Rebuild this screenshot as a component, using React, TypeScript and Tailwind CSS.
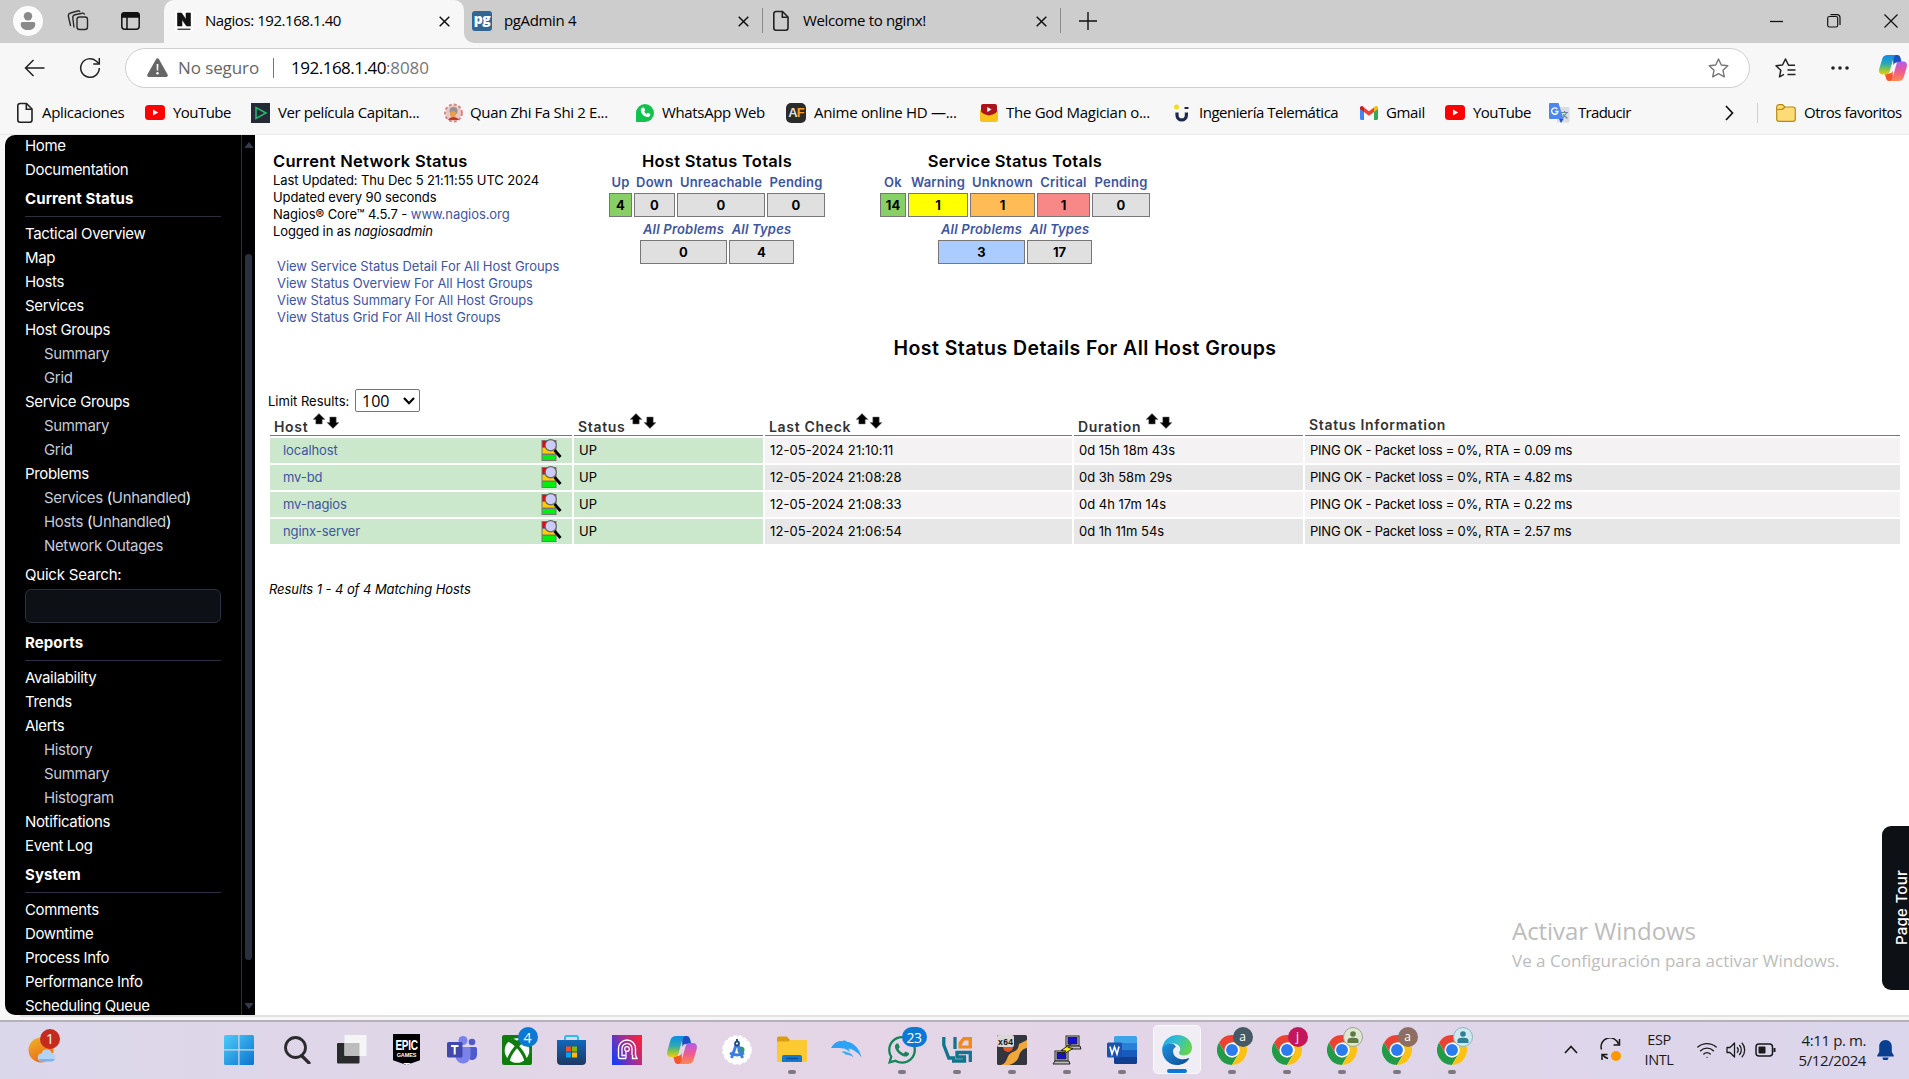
import React from 'react';
import { FaWhatsapp } from 'react-icons/fa';
import { Wifi } from 'lucide-react';

const ui = "font-['Open_Sans','Noto_Sans',sans-serif]";

/* ---------- small icons ---------- */

function PageIcon() {
  return (
    <svg width="18" height="22" viewBox="0 0 18 22" fill="none" stroke="#222" strokeWidth="1.6">
      <path d="M4 1.5h6.5L16 7v11a2.2 2.2 0 0 1-2.2 2.2H4A2.2 2.2 0 0 1 1.8 18V3.700A2.200 2.200 0 0 1 4 1.500Z" />
      <path d="M10.300 1.700V7.200H16" />
    </svg>
  );
}

function CloseX() {
  return (
    <svg width="11" height="11" viewBox="0 0 11 11" stroke="#111" strokeWidth="1.5">
      <path d="M.7.7l9.600 9.600M10.300.7.7 10.300" />
    </svg>
  );
}

function YouTubeIcon() {
  return (
    <svg width="20" height="15" viewBox="0 0 20 15">
      <rect width="20" height="15" rx="3.500" fill="#f00" />
      <path d="M8 4.500v6l5.200-3z" fill="#fff" />
    </svg>
  );
}

function CopilotIcon({ id, width, height }: { id: string; width: number; height: number }) {
  return (
    <svg width={width} height={height} viewBox="0 0 30 28" preserveAspectRatio="none">
      <defs>
        <linearGradient id={id + 'a'} x1="0" y1="0" x2="0" y2="1">
          <stop offset="0" stopColor="#0f8be8" />
          <stop offset=".45" stopColor="#2aa8b8" />
          <stop offset=".75" stopColor="#8cc63e" />
          <stop offset="1" stopColor="#f6c90e" />
        </linearGradient>
        <linearGradient id={id + 'b'} x1="0" y1="0" x2="0" y2="1">
          <stop offset="0" stopColor="#b05cf0" />
          <stop offset=".5" stopColor="#ee5a92" />
          <stop offset="1" stopColor="#ff8a4c" />
        </linearGradient>
      </defs>
      <path d="M15 0h4.500c2.200 0 3 1.200 3.600 3.300L24.300 8H19c-2 0-3 1.200-3.600 3z" fill="#1b4fc4" />
      <path d="M15 28h-4c-2.200 0-3-1.200-3.600-3.300L6.200 20H11c2 0 3-1.200 3.600-3z" fill="#f4552c" />
      <path d="M9.500 0H19c-1.700 0-3 1.500-3.700 4L11.500 17.500C10.800 20 9.700 21 7.500 21H4C.4 21-.6 18 .4 14.500L3.500 4C4.400 1.300 6 0 9.500 0Z" fill={`url(#${id}a)`} />
      <path d="M20.500 28H11c1.700 0 3-1.500 3.700-4L18.500 10.500C19.200 8 20.300 7 22.500 7H26c3.600 0 4.600 3 3.600 6.500L26.500 24c-.9 2.700-2.500 4-6 4Z" fill={`url(#${id}b)`} />
    </svg>
  );
}

/* ---------- tab strip ---------- */

function TabStrip() {
  return (
    <div className="flex h-[43px] bg-[#cdcdcd]">
      <div className="flex w-[164px] items-center rounded-br-[10px] bg-[#cdcdcd] pb-[2px] pl-[13px]">
        <div className="flex h-[30px] w-[30px] items-center justify-center rounded-full bg-[#fbfbfb]">
          <svg width="16" height="18" viewBox="0 0 16 18" fill="#8a8a8a">
            <circle cx="8" cy="4.200" r="4.200" />
            <path d="M2.500 10h11A1.800 1.800 0 0 1 15.300 12c0 4-3 6-7.300 6S.7 16 .7 12a1.800 1.800 0 0 1 1.800-2Z" />
          </svg>
        </div>
        <svg className="ml-6" width="22" height="21" viewBox="0 0 22 21" fill="none" stroke="#2a2a2a" strokeWidth="1.400">
          <rect x="10" y="7" width="10.500" height="12.500" rx="2.500" />
          <path d="M7 17.500 5.800 8A3 3 0 0 1 8 4.800l7-1.600a2 2 0 0 1 2.500 1.500" />
          <path d="M3.600 16 1.400 6.500A3 3 0 0 1 3.500 3l7-2a2 2 0 0 1 2.500 1" />
        </svg>
        <svg className="ml-8" width="19" height="18" viewBox="0 0 19 18" fill="none" stroke="#111" strokeWidth="1.500">
          <rect x=".8" y=".8" width="17.400" height="16.400" rx="3" />
          <path d="M1 3a2 2 0 0 1 2-2h13a2 2 0 0 1 2 2v2H1Z" fill="#111" />
          <path d="M6 5v12" />
        </svg>
      </div>
      <div className="flex w-[300px] items-center rounded-t-[10px] bg-[#f7f7f7] pb-[2px] pl-[11px] pr-[14px]">
        <svg width="18" height="20" viewBox="0 0 18 20">
          <rect width="18" height="20" fill="#fff" />
          <path d="M2.500 15V2h4l4.500 6.500V2h4.500v13h-4L7 8.500V15Z" fill="#111" stroke="#111" strokeWidth=".6" />
          <path d="M2.500 18.300h13" stroke="#444" strokeWidth="1.500" />
        </svg>
        <span className="ml-3 text-[15px] tracking-[-0.43px]">Nagios: 192.168.1.40</span>
        <span className="ml-auto pt-px"><CloseX /></span>
      </div>
      <div className="flex flex-1 bg-[#f7f7f7]">
        <div className="flex flex-1 items-center rounded-bl-[10px] bg-[#cdcdcd] pb-[2px]">
          <div className="flex w-[298px] items-center pl-2 pr-[13px]">
            <span className="flex h-5 w-5 items-center justify-center rounded-[3px] bg-[#326690] pb-1 font-['Open_Sans',sans-serif] text-[14px] font-extrabold leading-none tracking-[-0.5px] text-white">pg</span>
            <span className="ml-[12px] text-[15px] tracking-[-0.35px]">pgAdmin 4</span>
            <span className="ml-auto pt-px"><CloseX /></span>
          </div>
          <div className="flex h-[25px] w-[299px] items-center border-x border-[#8b8b8b] pl-[9px] pr-[13px]">
            <PageIcon />
            <span className="ml-[13px] text-[15px] tracking-[-0.35px]">Welcome to nginx!</span>
            <span className="ml-auto pt-px"><CloseX /></span>
          </div>
          <svg className="ml-[18px]" width="18" height="18" viewBox="0 0 18 18" stroke="#111" strokeWidth="1.400">
            <path d="M9 0v18M0 9h18" />
          </svg>
          <div className="ml-auto flex items-center pr-[11px] pt-px">
            <svg width="14" height="14" viewBox="0 0 14 14" stroke="#111" strokeWidth="1.300"><path d="M1 7.500h13" /></svg>
            <svg className="ml-[44px]" width="14" height="14" viewBox="0 0 14 14" fill="none" stroke="#111" strokeWidth="1.200">
              <rect x=".7" y="2.500" width="10" height="10.500" rx="1.800" />
              <path d="M3.500.7h6.500a3 3 0 0 1 3 3V11" />
            </svg>
            <svg className="ml-[43px]" width="14" height="14" viewBox="0 0 14 14" stroke="#111" strokeWidth="1.200"><path d="M.5.5l13 13M13.500.5l-13 13" /></svg>
          </div>
        </div>
      </div>
    </div>
  );
}

/* ---------- address bar ---------- */

function AddressRow() {
  return (
    <div className="flex h-[49px] items-center">
      <svg className="ml-6" width="21" height="18" viewBox="0 0 21 18" fill="none" stroke="#222" strokeWidth="1.500">
        <path d="M20.500 9H1.500M9.500 1l-8 8 8 8" />
      </svg>
      <svg className="ml-[34px]" width="22" height="22" viewBox="0 0 22 22" fill="none" stroke="#222" strokeWidth="1.500">
        <path d="M20.300 11a9.300 9.300 0 1 1-3.200-7l3 2.700" />
        <path d="M20.300 1v6h-6" />
      </svg>
      <div className="ml-[24px] flex h-10 w-[1625px] items-center rounded-full border border-[#cfcfcf] bg-white pl-[21px] pr-5">
        <svg width="21" height="19" viewBox="0 0 21 19">
          <path d="M9 1.200a1.700 1.700 0 0 1 3 0l8.600 15.300A1.700 1.700 0 0 1 19 19H2a1.700 1.700 0 0 1-1.600-2.500Z" fill="#666" />
          <path d="M9.600 6h1.800l-.2 6.500H9.800z" fill="#fff" />
          <circle cx="10.500" cy="15.200" r="1.200" fill="#fff" />
        </svg>
        <span className="ml-[10px] text-[17px] tracking-[-0.1px] text-[#666]">No seguro</span>
        <span className="ml-[14px] h-5 w-px bg-[#777]" />
        <span className="ml-[17px] text-[17px] tracking-[-0.5px] text-black">192.168.1.40<span className="tracking-[-0.1px] text-[#767676]">:8080</span></span>
        <svg className="ml-auto" width="21" height="20" viewBox="0 0 21 20" fill="none" stroke="#777" strokeWidth="1.400" strokeLinejoin="round">
          <path d="m10.500 1 2.800 6 6.500.8-4.800 4.500 1.300 6.500-5.800-3.200-5.800 3.200L6 12.300 1.200 7.800l6.500-.8Z" />
        </svg>
      </div>
      <svg className="ml-[25px]" width="21" height="20" viewBox="0 0 21 20" fill="none" stroke="#222" strokeWidth="1.500" strokeLinejoin="round">
        <path d="M20 7.300h-6.500L10.500 1l-3 6-6.500.8 4.800 4.500-1.300 6.500 4.500-2.500M12.500 12h8M12.500 16.500h8" />
      </svg>
      <svg className="ml-[35px]" width="18" height="4" viewBox="0 0 18 4" fill="#222">
        <circle cx="2" cy="2" r="1.800" /><circle cx="9" cy="2" r="1.800" /><circle cx="16" cy="2" r="1.800" />
      </svg>
      <span className="ml-[30px]"><CopilotIcon id="cb" width={28} height={26} /></span>
    </div>
  );
}

/* ---------- bookmarks ---------- */

function Bookmark({ cls, gap, icon, label }: { cls: string; gap: string; icon: React.ReactNode; label: string }) {
  return (
    <div className={`flex shrink-0 items-center whitespace-nowrap ${cls}`}>
      {icon}
      <span className={gap}>{label}</span>
    </div>
  );
}

function Bookmarks() {
  return (
    <div className="flex h-[43px] items-center pb-[2px] pl-4 text-[15px] tracking-[-0.35px]">
      <Bookmark cls="w-[129px]" gap="ml-2" icon={<PageIcon />} label="Aplicaciones" />
      <Bookmark cls="w-[106px] tracking-[-0.55px]" gap="ml-2" icon={<YouTubeIcon />} label="YouTube" />
      <Bookmark cls="w-[193px] tracking-[-0.4px]" gap="ml-2" label="Ver película Capitan..." icon={
        <svg width="19" height="20" viewBox="0 0 19 20"><rect width="19" height="20" fill="#252b36" /><path d="M5 4.500c0 3 0 8 0 11l10-5.500Z" fill="none" stroke="#27b56b" strokeWidth="1.600" /></svg>
      } />
      <Bookmark cls="w-[192px]" gap="ml-[7px]" label="Quan Zhi Fa Shi 2 E..." icon={
        <svg width="19" height="20" viewBox="0 0 19 20">
          <circle cx="9.500" cy="10" r="8" fill="#e9c9c6" />
          <circle cx="9.500" cy="10" r="8.500" fill="none" stroke="#d98080" strokeWidth="1.800" strokeDasharray="3 2" />
          <circle cx="9.500" cy="8" r="4" fill="#9a8f92" />
          <circle cx="9" cy="11" r="3" fill="#e8a13c" />
          <path d="M4 17c2-4 9-4 11 0" fill="#c0392b" />
        </svg>
      } />
      <Bookmark cls="w-[150px]" gap="ml-[8px]" label="WhatsApp Web" icon={
        <span className="flex h-[18px] w-[18px] items-center justify-center rounded-full rounded-bl-[4px] bg-[#12c24f]"><svg width="11" height="11" viewBox="0 0 11 11" fill="#fff"><path d="M2.500.8 4 .6l1.200 2.600-1 1.200c.5 1.200 1.300 2 2.500 2.500l1.200-1.100 2.400 1.200c.1 2-1.300 3.200-2.900 3.100C4 9.800 1 6.700.8 3.600.8 2.200 1.500 1.100 2.500.8Z" /></svg></span>
      } />
      <Bookmark cls="w-[194px] tracking-[-0.3px]" gap="ml-2" label="Anime online HD —..." icon={
        <span className="flex h-5 w-5 items-center justify-center rounded-[5px] bg-[#2b2b2b] font-['Liberation_Sans'] text-[13px] font-bold tracking-[-0.8px] text-[#ddd]">A<span className="text-[#f7a01b]">F</span></span>
      } />
      <Bookmark cls="w-[193px] tracking-[-0.28px]" gap="ml-2" label="The God Magician o..." icon={
        <svg width="18" height="18" viewBox="0 0 18 18"><path d="M0 6 18 6V16a2 2 0 0 1-2 2H2a2 2 0 0 1-2-2Z" fill="#f9c21a" /><path d="M1 2a2 2 0 0 1 2-2h12a2 2 0 0 1 2 2v5c0 2-5 4-8 4.500C6 11 1 9 1 7Z" fill="#a8161c" /><path d="M7.300 3v5L11.500 5.500Z" fill="#fff" /></svg>
      } />
      <Bookmark cls="w-[187px] tracking-[-0.48px]" gap="ml-[9px]" label="Ingeniería Telemática" icon={
        <svg width="17" height="18" viewBox="0 0 17 18" fill="none"><circle cx="3.500" cy="3" r="2.500" fill="#f6dd1b" /><path d="M4 8.500v2.700a4.700 4.700 0 0 0 9.400 0V8.500" stroke="#1f2a4a" strokeWidth="3.200" /><path d="M11.500 4h4" stroke="#1f2a4a" strokeWidth="2" /></svg>
      } />
      <Bookmark cls="w-[85px]" gap="ml-2" label="Gmail" icon={
        <svg width="18" height="14" viewBox="0 0 18 14"><path d="M0 2v10.500A1.500 1.500 0 0 0 1.500 14H4V5Z" fill="#4285f4" /><path d="M18 2v10.500a1.500 1.500 0 0 1-1.500 1.500H14V5Z" fill="#34a853" /><path d="M14 1.500V6l4-3V2c0-2-2-2.500-3.500-1.300Z" fill="#fbbc04" /><path d="M4 1.500 9 5.200l5-3.700V6L9 9.800 4 6Z" fill="#ea4335" /><path d="M0 2v1l4 3V1.500l-.5-.8C2-.5 0 .2 0 2Z" fill="#c5221f" /></svg>
      } />
      <Bookmark cls="w-[104px] tracking-[-0.55px]" gap="ml-2" icon={<YouTubeIcon />} label="YouTube" />
      <Bookmark cls="w-[176px] tracking-[-0.7px]" gap="ml-2" label="Traducir" icon={
        <svg width="21" height="20" viewBox="0 0 21 20"><rect x="8" y="4" width="12.500" height="15.500" rx="1" fill="#d9dce0" /><path d="M12 9.500h7M15.500 8v2M13 16l4.500-6M14 11.500l4.500 4" stroke="#6b8a96" strokeWidth="1.200" /><path d="M0 1a1 1 0 0 1 1-1h8.500l5 16H1a1 1 0 0 1-1-1Z" fill="#4c86f0" /><path d="m10 16h4.500L12 20Z" fill="#2b4fbd" /><path d="M8.300 6A3.200 3.200 0 1 0 9 8.500H6.200" fill="none" stroke="#fff" strokeWidth="1.400" /></svg>
      } />
      <svg width="9" height="16" viewBox="0 0 9 16" fill="none" stroke="#111" strokeWidth="1.700"><path d="m1 1 6.500 7L1 15" /></svg>
      <span className="ml-[23px] h-5 w-px bg-[#d0d0d0]" />
      <Bookmark cls="ml-[18px] tracking-[-0.45px]" gap="ml-2" label="Otros favoritos" icon={
        <svg width="20" height="18" viewBox="0 0 20 18" fill="#fddc77" stroke="#b58a12" strokeWidth="1.200"><path d="M.7 3A2.200 2.200 0 0 1 3 .7h3.500L9 3h8a2.300 2.300 0 0 1 2.300 2.300V15a2.300 2.300 0 0 1-2.300 2.300H3A2.300 2.300 0 0 1 .7 15Z" /><path d="M.7 5.500h5.800L9 3" fill="#f0c23c" /></svg>
      } />
    </div>
  );
}

/* ---------- Nagios sidebar ---------- */

function Item({ children }: { children: React.ReactNode }) {
  return <div className="h-6 leading-6">{children}</div>;
}
function Sub({ children }: { children: React.ReactNode }) {
  return <div className="h-6 pl-[19px] leading-6 text-[#c6cbdb]">{children}</div>;
}
function Heading({ children }: { children: React.ReactNode }) {
  return (
    <div className="my-[5px] h-[30px] border-b border-[#2a3040] text-[15px] font-bold leading-6 tracking-[0.1px]">{children}</div>
  );
}

function Sidebar() {
  return (
    <div className="ml-[5px] flex h-[880px] w-[250px] shrink-0 overflow-hidden rounded-l-[10px] bg-black text-white">
      <nav className="w-[237px] border-r border-[#2a3040] pl-5 pr-5 text-[15px] tracking-[-0.34px]">
        <div className="-mt-px">
          <Item>Home</Item>
          <Item>Documentation</Item>
          <Heading>Current Status</Heading>
          <Item>Tactical Overview</Item>
          <Item>Map</Item>
          <Item>Hosts</Item>
          <Item>Services</Item>
          <Item>Host Groups</Item>
          <Sub>Summary</Sub>
          <Sub>Grid</Sub>
          <Item>Service Groups</Item>
          <Sub>Summary</Sub>
          <Sub>Grid</Sub>
          <Item>Problems</Item>
          <Sub>Services <span className="text-white">(</span>Unhandled<span className="text-white">)</span></Sub>
          <Sub>Hosts <span className="text-white">(</span>Unhandled<span className="text-white">)</span></Sub>
          <Sub>Network Outages</Sub>
          <div className="mt-[5px] h-[26px] leading-6 tracking-[-0.2px]">Quick Search:</div>
          <div className="mb-2 h-[34px] rounded-[6px] border border-[#2a3040] bg-[#0d1015]" />
          <Heading>Reports</Heading>
          <Item>Availability</Item>
          <Item>Trends</Item>
          <Item>Alerts</Item>
          <Sub>History</Sub>
          <Sub>Summary</Sub>
          <Sub>Histogram</Sub>
          <Item>Notifications</Item>
          <Item>Event Log</Item>
          <Heading>System</Heading>
          <Item>Comments</Item>
          <Item>Downtime</Item>
          <Item>Process Info</Item>
          <Item>Performance Info</Item>
          <Item>Scheduling Queue</Item>
        </div>
      </nav>
      <div className="flex flex-1 flex-col items-center pt-[7px]">
        <svg width="8" height="6" viewBox="0 0 8 6" fill="#333a4c"><path d="M4 0l4 5v1H0V5Z" /></svg>
        <div className="mt-[106px] h-[706px] w-[7px] rounded-full bg-[#2a3040]" />
        <svg className="mt-[43px]" width="8" height="6" viewBox="0 0 8 6" fill="#333a4c"><path d="M4 6 0 1V0h8v1Z" /></svg>
      </div>
    </div>
  );
}

/* ---------- totals ---------- */

function Total({ w, label, value, bg, italic }: { w: string; label: string; value: string; bg: string; italic?: boolean }) {
  return (
    <div className={`flex flex-col items-center ${w}`}>
      <div className={`flex h-[17px] items-center whitespace-nowrap font-semibold text-[#3f559e] ${italic ? 'italic tracking-[0.2px]' : 'tracking-[0.2px]'}`}>{label}</div>
      <div className={`mt-[2px] flex h-6 w-full items-center justify-center border border-[#777] pt-px font-bold text-black ${bg}`}>{value}</div>
    </div>
  );
}

function Totals({ title, children, second, cls }: { title: string; children: React.ReactNode; second: React.ReactNode; cls: string }) {
  return (
    <div className={`flex flex-col items-center text-[13px] ${cls}`}>
      <div className="h-[25px] text-[16.500px] font-semibold leading-6 tracking-[0.28px]">{title}</div>
      <div className="flex gap-[2px]">{children}</div>
      <div className="mt-1 flex gap-[2px]">{second}</div>
    </div>
  );
}

/* ---------- hosts table ---------- */

function SortArrows() {
  return (
    <svg className="ml-[5px] mt-px" width="26" height="16" viewBox="0 0 26 16" fill="#000" stroke="#777" strokeWidth=".5">
      <path d="M6 0.500 12 6.500H9.200V11H2.800V6.500H0Z" />
      <path d="M20 15.500 14 9.500h2.800V4h6.400v5.500H26Z" />
    </svg>
  );
}

function DetailIcon() {
  return (
    <svg width="21" height="23" viewBox="0 0 21 23">
      <rect x=".5" y="1" width="15" height="21" fill="#777" />
      <rect x="1.500" y="2" width="13" height="6" fill="#e00" />
      <rect x="1.500" y="9" width="13" height="5.500" fill="#fc0" />
      <rect x="1.500" y="16" width="13" height="5" fill="#0e1" />
      <path d="m13.500 11 6 7" stroke="#000" strokeWidth="2.800" />
      <circle cx="9.700" cy="6.300" r="5.600" fill="#ccccfb" stroke="#666" strokeWidth="1.200" />
    </svg>
  );
}

const cols = 'grid grid-cols-[302px_189px_307px_229px_595px] gap-x-[2px]';

const hosts = [
  ['localhost', '12-05-2024 21:10:11', '0d 15h 18m 43s', '0.09'],
  ['mv-bd', '12-05-2024 21:08:28', '0d 3h 58m 29s', '4.82'],
  ['mv-nagios', '12-05-2024 21:08:33', '0d 4h 17m 14s', '0.22'],
  ['nginx-server', '12-05-2024 21:06:54', '0d 1h 11m 54s', '2.57'],
];

function HeaderCell({ label, sort = true }: { label: string; sort?: boolean }) {
  return (
    <div className="flex h-6 items-start border-b border-[#777] pl-[4px]">
      <span className={`text-[14px] font-semibold leading-[18px] tracking-[0.67px] text-[#333] ${sort ? 'pt-[6px]' : 'pt-[4px]'}`}>{label}</span>
      {sort && <SortArrows />}
    </div>
  );
}

function HostTable() {
  return (
    <div className="ml-[15px] text-[13px]">
      <div className={cols}>
        <HeaderCell label="Host" />
        <HeaderCell label="Status" />
        <HeaderCell label="Last Check" />
        <HeaderCell label="Duration" />
        <HeaderCell label="Status Information" sort={false} />
      </div>
      <div className="mt-[2px] flex flex-col gap-[2px]">
        {hosts.map(([name, check, dur, rta], i) => {
          const bg = i % 2 ? 'bg-[#e7e7e7]' : 'bg-[#f4f2f2]';
          return (
            <div key={name} className={`${cols} h-[25px] leading-[25px]`}>
              <div className="flex items-center justify-between bg-[#cbe8cd] pl-[13px] pr-[10px] tracking-[-0.1px] text-[#3f559e]">
                <span>{name}</span>
                <DetailIcon />
              </div>
              <div className="bg-[#cbe8cd] pl-[5px]">UP</div>
              <div className={`${bg} pl-[5px] tracking-[0.1px]`}>{check}</div>
              <div className={`${bg} pl-[5px]`}>{dur}</div>
              <div className={`${bg} pl-[5px] tracking-[-0.22px]`}>PING OK - Packet loss = 0%, RTA = {rta} ms</div>
            </div>
          );
        })}
      </div>
    </div>
  );
}

function Main() {
  return (
    <main className="flex-1 text-black">
      <div className="flex h-[184px] pt-[14px]">
        <section className="ml-[18px] w-[336px] text-[13px] leading-[17px] tracking-[-0.1px]">
          <h1 className="h-[23px] text-[16.500px] font-semibold leading-6 tracking-[0.28px]">Current Network Status</h1>
          <p>Last Updated: Thu Dec 5 21:11:55 UTC 2024</p>
          <p className="tracking-[-0.12px]">Updated every 90 seconds</p>
          <p className="tracking-[-0.06px]">Nagios® Core™ 4.5.7 - <span className="text-[#3f559e]">www.nagios.org</span></p>
          <p>Logged in as <i>nagiosadmin</i></p>
          <div className="mt-[18px] pl-[4px] tracking-[-0.04px] text-[#3f559e]">
            <p>View Service Status Detail For All Host Groups</p>
            <p>View Status Overview For All Host Groups</p>
            <p>View Status Summary For All Host Groups</p>
            <p>View Status Grid For All Host Groups</p>
          </div>
        </section>
        <Totals cls="w-[216px]" title="Host Status Totals" second={<>
          <Total w="w-[87px]" label="All Problems" value="0" bg="bg-[#e0e0e0]" italic />
          <Total w="w-[65px]" label="All Types" value="4" bg="bg-[#e0e0e0]" italic />
        </>}>
          <Total w="w-[23px]" label="Up" value="4" bg="bg-[#88d066]" />
          <Total w="w-[41px]" label="Down" value="0" bg="bg-[#e0e0e0]" />
          <Total w="w-[88px]" label="Unreachable" value="0" bg="bg-[#e0e0e0]" />
          <Total w="w-[58px]" label="Pending" value="0" bg="bg-[#e0e0e0]" />
        </Totals>
        <Totals cls="ml-[55px] w-[270px]" title="Service Status Totals" second={<>
          <Total w="w-[87px]" label="All Problems" value="3" bg="bg-[#aaccff]" italic />
          <Total w="w-[65px]" label="All Types" value="17" bg="bg-[#e0e0e0]" italic />
        </>}>
          <Total w="w-[26px]" label="Ok" value="14" bg="bg-[#88d066]" />
          <Total w="w-[60px]" label="Warning" value="1" bg="bg-[#ffff00]" />
          <Total w="w-[65px]" label="Unknown" value="1" bg="bg-[#ffbb55]" />
          <Total w="w-[53px]" label="Critical" value="1" bg="bg-[#f88888]" />
          <Total w="w-[58px]" label="Pending" value="0" bg="bg-[#e0e0e0]" />
        </Totals>
      </div>
      <h2 className="mt-[17px] pl-[6px] text-center text-[19.500px] font-semibold leading-6 tracking-[0.43px]">Host Status Details For All Host Groups</h2>
      <div className="mt-[29px] flex h-[23px] items-center pl-[13px] text-[13px]">
        <span className="w-[83px] pt-0.5">Limit Results:</span>
        <span className={`${ui} ml-1 flex h-[23px] w-[65px] items-center justify-between rounded-[2px] border border-[#767676] pl-[6px] pr-[4px] text-[16px]`}>
          100
          <svg width="12" height="8" viewBox="0 0 12 8" fill="none" stroke="#000" strokeWidth="2.200"><path d="m1 1 5 5.200L11 1" /></svg>
        </span>
      </div>
      <HostTable />
      <p className="mt-9 pl-[14px] text-[13px] italic leading-[18px] tracking-[-0.07px]">Results 1 - 4 of 4 Matching Hosts</p>
    </main>
  );
}

/* ---------- taskbar ---------- */

function ChromeLogo() {
  return (
    <svg width="30" height="30" viewBox="0 0 48 48">
      <circle cx="24" cy="24" r="24" fill="#fff" />
      <path d="M3.200 12A24 24 0 0 1 44.800 12H24L13.600 30Z" fill="#ea4335" />
      <path d="M3.200 12A24 24 0 0 0 24 48l10.400-18L24 36 13.600 30Z" fill="#229a48" />
      <path d="M44.800 12A24 24 0 0 1 24 48l10.400-18A12 12 0 0 0 24 12Z" fill="#fbc116" />
      <circle cx="24" cy="24" r="12" fill="#fff" />
      <circle cx="24" cy="24" r="9.500" fill="#2a7af0" />
    </svg>
  );
}

function PersonGlyph({ color }: { color: string }) {
  return <svg width="12" height="12" viewBox="0 0 12 12" fill={color}><circle cx="6" cy="3" r="2.800" /><path d="M.5 12V9.500C.5 7.500 3 6.800 6 6.800s5.500.7 5.500 2.700V12Z" /></svg>;
}

function Slot({ children, running, active, badge }: { children: React.ReactNode; running?: boolean; active?: boolean; badge?: React.ReactNode }) {
  return (
    <div className="flex w-[55px] shrink-0 justify-center">
      <div className={`relative flex h-[49px] w-12 items-center justify-center rounded-[5px] ${active ? 'border border-white/60 bg-[#f1edf5]' : ''}`}>
        {children}
        {badge}
        {running && <span className="absolute bottom-0 left-5 h-1 w-2 rounded-full bg-[#7d7880]" />}
        {active && <span className="absolute bottom-0 left-[13px] h-1 w-5 rounded-full bg-[#0a78d4]" />}
      </div>
    </div>
  );
}

const badgeBase = 'absolute flex items-center justify-center rounded-full text-white';

function Taskbar() {
  return (
    <div className="flex h-[59px] items-center border-t-2 border-[#b5b1bb] bg-linear-to-r from-[#dbd7ea] from-0% via-[#e5d5e6] via-45% to-[#dbd6ec] pb-[2px]">
      <div className="relative ml-[28px] mr-[156px] h-9 w-[30px] pt-[3px]">
        <svg width="29" height="30" viewBox="0 0 29 30">
          <defs><linearGradient id="sun" x1="0" y1="0" x2=".5" y2="1"><stop stopColor="#efb62c" /><stop offset="1" stopColor="#ec6a14" /></linearGradient></defs>
          <circle cx="13" cy="15" r="12.500" fill="url(#sun)" />
          <path d="M14 26.500a4 4 0 0 1-.5-8 5.500 5.500 0 0 1 10.400-.5 4.300 4.300 0 0 1-.4 8.500Z" fill="#b5d4f5" />
          <path d="M14 26.500a4 4 0 0 1-3.500-2.500h16.400a4 4 0 0 1-3.400 2.500Z" fill="#7fb0e6" />
        </svg>
        <span className={`${badgeBase} -top-[3px] left-[12px] h-5 w-5 bg-[#c42b1c] text-[14px]`}>1</span>
      </div>

      <Slot>
        <svg className="-ml-[5px]" width="30" height="30" viewBox="0 0 30 30">
          <defs><linearGradient id="win" x1="0" y1="0" x2="1" y2="1"><stop stopColor="#4fcbfa" /><stop offset="1" stopColor="#0a74cf" /></linearGradient></defs>
          <path d="M0 1.500Q0 0 1.500 0h12.800v14.300H0ZM15.500 0h13Q30 0 30 1.500v12.800H15.500ZM0 15.500h14.300V30H1.500Q0 30 0 28.500ZM15.500 15.500H30v13q0 1.500-1.500 1.500h-13Z" fill="url(#win)" />
        </svg>
      </Slot>
      <Slot>
        <svg width="28" height="28" viewBox="0 0 28 28" fill="none" stroke="#2b2b2e" strokeWidth="2.800"><circle cx="12.500" cy="11.500" r="10" /><path d="m19 20 7 7" strokeWidth="3.200" strokeLinecap="round" /></svg>
      </Slot>
      <Slot>
        <svg width="30" height="29" viewBox="0 0 30 29">
          <rect x="0" y="8" width="22.500" height="20.500" rx="1" fill="#2a2a2a" />
          <rect x="7.500" y="0" width="22" height="21" rx="1" fill="#f5f5f5" />
          <path d="M7.500 8h15v13h-15Z" fill="#bcbcbc" />
        </svg>
      </Slot>
      <Slot>
        <div className="flex h-[31px] w-[27px] flex-col items-center bg-black pt-1 font-['Liberation_Sans'] font-bold leading-none text-white [clip-path:polygon(0_0,100%_0,100%_85%,50%_100%,0_85%)]">
          <span className="scale-y-150 text-[10px] leading-[13px] tracking-[-0.3px]">EPIC</span>
          <span className="mt-0.5 text-[5.500px] tracking-[-0.1px]">GAMES</span>
          <svg className="mt-1" width="10" height="3" viewBox="0 0 10 3" fill="#fff"><path d="M0 0h10L5 3Z" /></svg>
        </div>
      </Slot>
      <Slot>
        <svg width="30" height="28" viewBox="0 0 30 28">
          <circle cx="25" cy="6" r="3.300" fill="#5059c9" /><path d="M20 11h8.500q1.500 0 1.500 1.500V19a5 5 0 0 1-8 4Z" fill="#5059c9" />
          <circle cx="16" cy="4.500" r="4.500" fill="#7b83eb" /><path d="M9 11h13q1.500 0 1.500 1.500V20a7.500 7.500 0 0 1-15 0Z" fill="#7b83eb" />
          <rect x="0" y="6" width="15.500" height="15.500" rx="1.500" fill="#4048ae" />
          <path d="M4 10h7.500M7.700 10v8.500" stroke="#fff" strokeWidth="2" />
        </svg>
      </Slot>
      <Slot badge={<span className={`${badgeBase} left-[25px] top-[2px] h-5 w-5 bg-[#0a78d4] text-[14px]`}>4</span>}>
        <svg width="30" height="30" viewBox="0 0 30 30">
          <rect width="30" height="30" rx="2" fill="#107c10" />
          <circle cx="15" cy="15.500" r="12.300" fill="#fff" />
          <path d="M5 4.500C13 7 22 17 24.500 27.500M25 4.500C17 7 8 17 5.500 27.500" fill="none" stroke="#107c10" strokeWidth="3.200" />
          <path d="M9 3.500c2.500 0 4.500 1 6 2.200 1.500-1.200 3.500-2.200 6-2.200l-2 4L15 9.500 11 7.500Z" fill="#107c10" />
        </svg>
      </Slot>
      <Slot>
        <svg width="29" height="30" viewBox="0 0 29 30">
          <defs><linearGradient id="store" x1="0" y1="0" x2="0" y2="1"><stop stopColor="#1068ba" /><stop offset="1" stopColor="#1d3763" /></linearGradient></defs>
          <path d="M8 7V2.500Q8 1 9.500 1h10Q21 1 21 2.500V7" fill="none" stroke="#29bdf2" strokeWidth="2" />
          <path d="M0 5h29v21a4 4 0 0 1-4 4H4a4 4 0 0 1-4-4Z" fill="url(#store)" />
          <path d="M9 11.500h5v5H9z" fill="#f25022" /><path d="M15 11.500h5v5h-5z" fill="#7fba00" /><path d="M9 17.500h5v5H9z" fill="#00a4ef" /><path d="M15 17.500h5v5h-5z" fill="#ffb900" />
        </svg>
      </Slot>
      <Slot>
        <svg width="30" height="30" viewBox="0 0 30 30">
          <defs><linearGradient id="pp" x1="0" y1=".7" x2="1" y2=".2"><stop stopColor="#1b3cf2" /><stop offset=".5" stopColor="#9b2f9a" /><stop offset="1" stopColor="#fb2237" /></linearGradient></defs>
          <rect width="30" height="30" fill="url(#pp)" />
          <path d="M14 23.500H8a1.500 1.500 0 0 1-1.500-1.500v-8.500a8.500 8.500 0 0 1 17 0V20l1.500 3.500h-4.500V20" fill="none" stroke="#fff" strokeWidth="1.400" />
          <path d="M14 20.500h-4v-7a5 5 0 0 1 10 0V20" fill="none" stroke="#fff" strokeWidth="1.300" />
          <circle cx="15" cy="14" r="2.300" fill="none" stroke="#fff" strokeWidth="1.200" />
          <path d="M14 16.500v7" stroke="#fff" strokeWidth="1.200" />
        </svg>
      </Slot>
      <Slot><CopilotIcon id="ct" width={30} height={28} /></Slot>
      <Slot>
        <svg width="30" height="30" viewBox="0 0 30 30" fill="none">
          <circle cx="15" cy="15" r="13.800" fill="#fff" stroke="#fff" strokeWidth="2" strokeDasharray="4 1.500" />
          <circle cx="19" cy="15" r="3.500" fill="#2b9c60" />
          <path d="M14.500 9 9.500 23M15.500 9l5 14M8 18c4 2.500 10 2.500 14 0" stroke="#3d7ee0" strokeWidth="3" />
          <circle cx="15" cy="8.500" r="2" fill="#fff" stroke="#1f4b86" strokeWidth="1.800" />
          <path d="M15 4v2.500" stroke="#1f4b86" strokeWidth="2" />
        </svg>
      </Slot>
      <Slot running>
        <svg width="30" height="27" viewBox="0 0 30 27">
          <path d="M0 2Q0 .5 1.500.5h8.300L13 4H28.500Q30 4 30 5.500V12H0Z" fill="#d99f12" />
          <path d="M0 5.500h11L13.500 4h15Q30 4 30 5.500v19q0 1.500-1.500 1.500h-27Q0 26 0 24.500Z" fill="#fdc932" />
          <path d="M5 26v-5a2 2 0 0 1 2-2h16a2 2 0 0 1 2 2v5Z" fill="#1478d0" /><path d="M9 22.500h12" stroke="#0a4d92" strokeWidth="1.500" />
        </svg>
      </Slot>
      <Slot>
        <svg width="31" height="19" viewBox="0 0 31 19">
          <path d="M0 8C3 3 7 .3 12 1.200L13 0l3 1.800c7 1.200 12 6 14.500 15.700C26.500 12 22 9 17.500 8.500L19 12l-5-3.300C10 7.500 5 8 0 8Z" fill="#2ba3f7" />
          <path d="M10.500 12c2-1 4-.8 5.500.3 2.500.2 5 1.700 6.500 5C19.500 15 17 14.300 14.500 14.800c-.8-1.600-2.200-2.300-4-2.800Z" fill="#3eaaf5" />
        </svg>
      </Slot>
      <Slot running badge={<span className={`${badgeBase} left-[24px] top-[2px] h-5 w-[25px] bg-[#0a78d4] text-[14px] tracking-[-0.5px]`}>23</span>}>
        <FaWhatsapp size={32} color="#16855a" />
      </Slot>
      <Slot running>
        <svg width="30" height="27" viewBox="0 0 30 27" fill="none">
          <path d="M1.800 1v8l5 13H13M13 1v12" stroke="#11768c" strokeWidth="3.300" />
          <path d="M28.300 26V16.500H15v4.500h7.500V25H10" stroke="#11768c" strokeWidth="3.300" />
          <path d="M16.500 6.500 21 1h9v11.500H16.500ZM20 8v1.500h6.500V4.500h-4Z" fill="#f08a1d" fillRule="evenodd" />
        </svg>
      </Slot>
      <Slot running>
        <svg width="30" height="30" viewBox="0 0 30 30">
          <rect width="30" height="30" rx="1.500" fill="#33363f" />
          <path d="M4 30c7-2 5-9 10-12s7-2 8-9l8-4v8c-5 1-7 4-8 8s-5 8-10 9Z" fill="#f2a73b" />
          <circle cx="11" cy="12" r="5" fill="#e2571c" />
          <rect width="17" height="12" rx="2" fill="#d8d8d8" />
          <text x="1" y="9.500" fontSize="8.500" fontWeight="bold" fill="#111" fontFamily="Liberation Sans" textLength="15">x64</text>
        </svg>
      </Slot>
      <Slot running>
        <svg width="30" height="30" viewBox="0 0 30 30" stroke="#222" strokeWidth="1">
          <rect x="14" y="1" width="13" height="10" fill="#ddd" /><rect x="16" y="2.500" width="9" height="6.500" fill="#1410d8" /><path d="m13 14 2-3h13l1 3Z" fill="#bbb" />
          <rect x="3" y="16" width="13" height="10" fill="#ddd" /><rect x="5" y="17.500" width="9" height="6.500" fill="#1410d8" /><path d="m1 29 2-3h14l1 3Z" fill="#bbb" />
          <path d="m20 8-11 7.500 5 .5-4 4 11-6.500-5-1Z" fill="#ffee10" />
        </svg>
      </Slot>
      <Slot running>
        <svg width="30" height="28" viewBox="0 0 30 28">
          <path d="M7 1.500Q7 0 8.500 0h20Q30 0 30 1.500V7H7Z" fill="#3fa3e8" /><path d="M7 7h23v7H7z" fill="#2a7fd6" /><path d="M7 14h23v7H7z" fill="#185abd" /><path d="M7 21h23v5.500q0 1.500-1.500 1.500h-20Q7 28 7 26.500Z" fill="#103f91" />
          <rect x="0" y="6.500" width="15" height="15" rx="1.500" fill="#1a52ae" />
          <path d="m3 10.500 2 7.500 2.500-7 2.500 7 2-7.500" fill="none" stroke="#fff" strokeWidth="1.600" />
        </svg>
      </Slot>
      <Slot active>
        <svg width="30" height="30" viewBox="0 0 30 30">
          <defs>
            <linearGradient id="eg" x1="0" y1="0" x2="1" y2=".4"><stop stopColor="#1fa8e8" /><stop offset=".5" stopColor="#30bfd0" /><stop offset="1" stopColor="#62d353" /></linearGradient>
            <linearGradient id="eb" x1="0" y1="0" x2="1" y2="1"><stop stopColor="#1f93e0" /><stop offset="1" stopColor="#0b4a92" /></linearGradient>
          </defs>
          <path d="M.3 13C1.500 5.500 7.500 0 15 0c9 0 15 6 15 12.500 0 5-3.500 8-8 8-3.500 0-5-1.300-5-2.500 0-1 1.200-1.500 1.200-3.700C18.200 11 15 8.500 11 8.500 6 8.500 1.800 10.500.3 13Z" fill="url(#eg)" />
          <path d="M.3 13C-.8 22.500 6.500 30 15 30c5 0 9.500-2.300 12-6 .4-.6-.2-1-.8-.7C20 26 11.500 23.500 11 16.500c0-2.600 1.700-4 3-4.700C12.800 9.800 11.500 8.500 9.500 8.500 5 8.500 1 10.500.3 13Z" fill="url(#eb)" />
        </svg>
      </Slot>
      <div className="flex">
        <Slot running badge={<span className={`${badgeBase} left-[25px] top-[2px] h-5 w-5 bg-[#455a64] text-[12px]`}>a</span>}><ChromeLogo /></Slot>
        <Slot running badge={<span className={`${badgeBase} left-[25px] top-[2px] h-5 w-5 bg-[#c2185b] text-[12px]`}>j</span>}><ChromeLogo /></Slot>
        <Slot running badge={<span className={`${badgeBase} left-[25px] top-[2px] h-5 w-5 border border-[#9aa68c] bg-[#dfe6d2]`}><PersonGlyph color="#5d7a45" /></span>}><ChromeLogo /></Slot>
        <Slot running badge={<span className={`${badgeBase} left-[25px] top-[2px] h-5 w-5 bg-[#8d6e63] text-[12px]`}>a</span>}><ChromeLogo /></Slot>
        <Slot running badge={<span className={`${badgeBase} left-[25px] top-[2px] h-5 w-5 border border-[#8fb5bd] bg-[#cfe8ee]`}><PersonGlyph color="#2e7f93" /></span>}><ChromeLogo /></Slot>
      </div>

      <div className="ml-auto flex items-center pr-[15px] text-[15px] leading-5 text-[#1a1a1a]">
        <svg width="14" height="9" viewBox="0 0 14 9" fill="none" stroke="#1a1a1a" strokeWidth="1.700"><path d="m1 8 6-6.500L13 8" /></svg>
        <svg className="ml-[22px]" width="22" height="24" viewBox="0 0 22 24" fill="none" stroke="#1a1a1a" strokeWidth="1.500">
          <path d="M1.500 11.500A8.500 8.500 0 0 1 18.500 6M19.500 1v6h-6M8 20.500a9 9 0 0 1-5.500-4M2 22v-5.500h5.500" />
          <circle cx="16" cy="18" r="5" fill="#ff9800" stroke="none" />
        </svg>
        <div className="ml-[19px] mr-px w-9 text-center text-[14.500px] tracking-[-0.4px]"><div>ESP</div><div>INTL</div></div>
        <Wifi className="ml-[18px]" size={22} strokeWidth={1.500} />
        <svg className="ml-2" width="20" height="18" viewBox="0 0 20 18" fill="none" stroke="#1a1a1a" strokeWidth="1.300" strokeLinejoin="round">
          <path d="M1 6.500h3L8.500 2v14L4 11.500H1ZM11 6.300a4 4 0 0 1 0 5.400M13.300 4a7.300 7.300 0 0 1 0 10M15.800 1.800a10.500 10.500 0 0 1 0 14.400" />
        </svg>
        <svg className="ml-[9px]" width="21" height="14" viewBox="0 0 21 14" fill="none" stroke="#1a1a1a" strokeWidth="1.500"><rect x="1" y="1" width="16.500" height="12" rx="3" /><rect x="3.500" y="3.500" width="7" height="7" rx="1" fill="#1a1a1a" stroke="none" /><path d="M19.500 5v4" strokeWidth="2" /></svg>
        <div className="ml-[20px] w-[70px] text-right tracking-[-0.4px]"><div className="whitespace-nowrap">4:11 p. m.</div><div>5/12/2024</div></div>
        <svg className="ml-[11px]" width="17" height="20" viewBox="0 0 17 20" fill="#0a3f8f"><path d="M8.500 0c4 0 6.300 3 6.300 6.500V12l2 3.500v.9H.2v-.9l2-3.500V6.500C2.200 3 4.500 0 8.500 0ZM5.500 17.500h6a3 3 0 0 1-6 0Z" /></svg>
      </div>
    </div>
  );
}

/* ---------- page ---------- */

export default function App() {
  return (
    <div className={`${ui} flex h-[1079px] w-[1909px] flex-col overflow-hidden bg-[#f7f7f7] text-black`}>
      <TabStrip />
      <AddressRow />
      <Bookmarks />
      <div className="relative -mt-px h-[886px] border-t border-[#e8e8e8] font-['Inter','Liberation_Sans',sans-serif]">
        <div className="flex h-[880px] bg-linear-to-r from-[#f7f7f7] from-[20px] to-white to-[20px]">
          <Sidebar />
          <Main />
        </div>
        <div className="ml-5 h-[2px] bg-[#e2e2e2]" />
        <div className="absolute right-0 top-[691px] flex h-[164px] w-[27px] items-center justify-center rounded-l-[9px] bg-[#0d1015] pl-[11px] text-white">
          <span className="rotate-180 whitespace-nowrap text-[15px] font-medium leading-none tracking-[0.26px] [writing-mode:vertical-rl]">Page Tour</span>
        </div>
        <div className={`${ui} absolute left-[1512px] top-[779px] whitespace-nowrap text-[#bcbcbc]`}>
          <div className="text-[24px] leading-[34px] tracking-[-0.05px]">Activar Windows</div>
          <div className="text-[17px] leading-[26px]">Ve a Configuración para activar Windows.</div>
        </div>
      </div>
      <Taskbar />
    </div>
  );
}
